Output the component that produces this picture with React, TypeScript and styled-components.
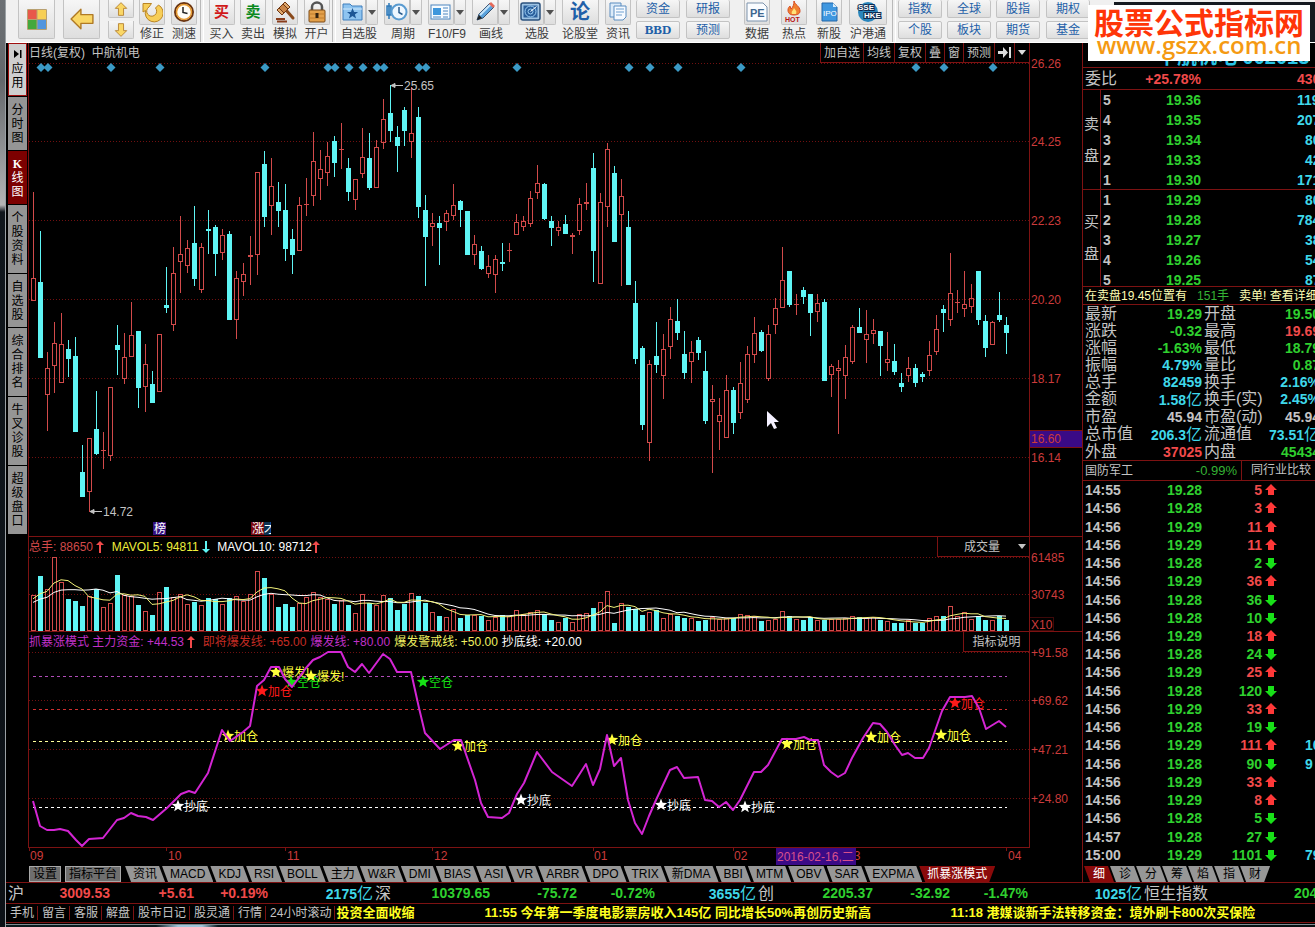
import React from 'react';
import styled, { createGlobalStyle, css } from 'styled-components';

const LINE = '#7d1212';
const AXIS = '#cc3b3b';
const UP = '#d24a4a';
const DOWN = '#5ff5f5';
const CYAN = '#3fd8ea';
const GREEN = '#2fd02f';
const RED = '#f04a4a';
const GREY = '#c4c4c4';

const GlobalStyle = createGlobalStyle`
  * { box-sizing: border-box; }
  html, body { margin: 0; padding: 0; background: #000; overflow: hidden; }
  body { font: 12px/14px "Liberation Sans", "Noto Sans CJK SC", sans-serif; color: ${GREY}; }
  button, select { font: inherit; color: inherit; margin: 0; padding: 0; border: 0; background: none; white-space: nowrap; }
  a { color: inherit; text-decoration: none; }
`;

const Page = styled.div`
  display: flex;
  min-height: 100vh;
  overflow: hidden;
  background: #000;
`;
const DesktopEdge = styled.div`
  flex: none;
  width: 6px;
  border-right: 1px solid #9aa0a4;
  background: linear-gradient(#6c7074 0, #63676b 80px, #b4b4b4 205px, #10161c 212px, #0c1116 100%);
`;
const Window = styled.div`
  flex: 1;
  min-width: 0;
  display: flex;
  flex-direction: column;
`;

/* ---------- toolbar ---------- */
const Toolbar = styled.header`
  position: relative;
  display: flex;
  align-items: flex-start;
  height: 43px;
  padding-left: 12px;
  background: #f0f0f0;
  border-bottom: 1px solid #fff;
  color: #3c3c3c;
  overflow: hidden;
`;
const face = css`
  border: 1px solid #c3c3c3;
  border-top: 0;
  border-radius: 0 0 2px 2px;
  background: linear-gradient(#f6f6f6, #dedede);
  display: flex;
  align-items: center;
  justify-content: center;
`;
const BigButton = styled.button`
  ${face}
  flex: none;
  width: 37px;
  height: 39px;
  margin-right: 8px;
`;
const Stack = styled.div<{ $gap?: number }>`
  flex: none;
  display: flex;
  flex-direction: column;
  gap: 3px;
  margin-right: ${p => p.$gap ?? 6}px;
`;
const SmallButton = styled.button`
  ${face}
  width: 26px;
  height: 18px;
`;
const TextButton = styled.button`
  ${face}
  width: 44px;
  height: 18px;
  border: 1px solid #c3c3c3;
  border-radius: 2px;
  color: #1d5fa8;
  &:first-child { border-top: 0; }
`;
const Bold = styled.b`
  font-family: "Liberation Serif", serif;
  font-size: 13px;
`;
const Tool = styled.div<{ $w?: number }>`
  display: flex;
  flex-direction: column;
  align-items: center;
  width: ${p => p.$w ?? 32}px;
  flex: none;
`;
const ToolFaces = styled.div`
  display: flex;
  height: 25px;
`;
const IconButton = styled.button<{ $w?: number }>`
  ${face}
  width: ${p => p.$w ?? 26}px;
  height: 25px;
`;
const ToolLabel = styled.span`
  line-height: 19px;
  white-space: nowrap;
`;
const Divider = styled.i`
  width: 4px;
  flex: none;
  height: 42px;
  border-left: 1px solid #b9b9b9;
  border-right: 1px solid #fff;
  margin-right: 2px;
`;
const ToolbarEnd = styled.div`
  flex: 1;
  height: 43px;
  margin-top: 2px;
  background: #15191f;
`;
const Glyph = styled.b<{ $c: string; $s?: number }>`
  color: ${p => p.$c};
  font-size: ${p => p.$s ?? 15}px;
  line-height: 20px;
`;
const Brand = styled.a`
  position: absolute;
  z-index: 5;
  left: 1088px;
  top: 5px;
  width: 222px;
  height: 56px;
  overflow: hidden;
  background: #fff;
  text-align: center;
`;
const BrandName = styled.span`
  display: block;
  font: bold 30px/32px "Noto Sans CJK SC", sans-serif;
  color: #ff3508;
  white-space: nowrap;
`;
const BrandUrl = styled.span`
  display: block;
  font: 600 24px/16px "Open Sans", sans-serif;
  color: #f59a12;
`;

/* ---------- body ---------- */
const Main = styled.main`
  display: flex;
  padding-left: 2px;
`;
const SideTabs = styled.nav`
  flex: none;
  width: 20px;
  display: flex;
  flex-direction: column;
  gap: 1px;
`;
const SideTab = styled.button<{ $tall?: boolean; $tone?: 'light' | 'active' }>`
  width: 19px;
  height: ${p => (p.$tall ? 68 : 53)}px;
  display: flex;
  flex-direction: column;
  align-items: center;
  justify-content: center;
  background: ${p => (p.$tone === 'active' ? '#7c0000' : p.$tone === 'light' ? '#cfcfcf' : '#959595')};
  color: ${p => (p.$tone === 'active' ? '#fff' : '#000')};
  ${p => p.$tone === 'light' && 'border: 1px solid #a01010; gap: 4px;'}
  span { width: 12px; line-height: 14px; white-space: normal; word-break: break-all; }
  b { font: bold 12px/14px "Liberation Serif", serif; }
  svg { flex: none; }
`;
const Charts = styled.div`
  flex: 1;
  min-width: 0;
  display: flex;
  flex-direction: column;
  overflow: hidden;
  svg { display: block; flex: none; overflow: visible; }
  svg svg { overflow: hidden; }
`;
const Panel = styled.section<{ $line?: boolean }>`
  ${p => p.$line && `border-top: 1px solid ${LINE};`}
`;
const PanelHead = styled.div`
  display: flex;
  align-items: stretch;
  justify-content: space-between;
  height: 20px;
  margin-right: 52px;
  border-left: 1px solid ${LINE};
  border-right: 1px solid ${LINE};
`;
const Legend = styled.div`
  display: flex;
  align-items: center;
  white-space: pre;
  gap: 4px;
  line-height: 20px;
`;
const Tint = styled.span<{ $c: string }>`
  color: ${p => p.$c};
  display: inline-flex;
  align-items: center;
`;
const HeadButtons = styled.div`
  display: flex;
  border-bottom: 1px solid ${LINE};
`;
const HeadButton = styled.button<{ $w?: number }>`
  display: flex;
  align-items: center;
  justify-content: center;
  border-left: 1px solid ${LINE};
  padding: 0 3px;
  ${p => p.$w && `width: ${p.$w}px;`}
`;
const SelectBox = styled.label`
  display: flex;
  align-items: center;
  justify-content: flex-end;
  width: 92px;
  padding-right: 3px;
  border-left: 1px solid ${LINE};
  border-bottom: 1px solid ${LINE};
  select { appearance: none; width: 54px; outline: none; background: #000; }
`;
const TabStrip = styled.nav`
  display: flex;
  height: 16px;
  padding-left: 1px;
  overflow: hidden;
`;
const SquareTab = styled.button`
  height: 16px;
  padding: 0 3px;
  margin-right: 4px;
  background: #6f6f6f;
  border: 1px solid #a8a8a8;
  color: #000;
  line-height: 14px;
`;
const SlantTab = styled.button<{ $active?: boolean; $last?: boolean; $tight?: boolean }>`
  height: 16px;
  flex: none;
  padding: 0 ${p => (p.$tight ? 8 : 9)}px;
  margin-right: ${p => (p.$tight ? -3 : -4)}px;
  line-height: 16px;
  background: ${p => (p.$active ? '#8a0a0a' : '#979797')};
  color: ${p => (p.$active ? '#fff' : '#000')};
  clip-path: ${p =>
    p.$last
      ? 'polygon(0 0, 100% 0, calc(100% - 6px) 100%, 6px 100%)'
      : 'polygon(0 0, calc(100% - 6px) 0, 100% 100%, 6px 100%)'};
`;

/* ---------- quote panel ---------- */
const Quote = styled.aside`
  flex: none;
  width: 233px;
  display: flex;
  flex-direction: column;
  overflow: hidden;
  border-left: 1px solid ${LINE};
  table { border-collapse: collapse; table-layout: fixed; width: 255px; }
  td, th { padding: 0; font-weight: normal; text-align: left; white-space: nowrap; }
`;
const StockName = styled.h1`
  margin: 0;
  height: 24px;
  padding-left: 74px;
  font: bold 20px/28px "Liberation Sans", "Noto Sans CJK SC", sans-serif;
  color: #29c3e6;
  white-space: nowrap;
`;
const Ratio = styled.div`
  display: flex;
  align-items: center;
  height: 23px;
  padding-left: 2px;
  border-top: 1px solid ${LINE};
  border-bottom: 1px solid ${LINE};
  font-size: 16px;
  white-space: nowrap;
`;
const Num = styled.b<{ $c?: string; $w?: number }>`
  display: inline-block;
  font: bold 14px/16px "Liberation Sans", "Noto Sans CJK SC", sans-serif;
  color: ${p => p.$c ?? GREY};
  ${p => p.$w && `width: ${p.$w}px; text-align: right; flex: none;`}
  i { font: normal 16px/16px "Noto Sans CJK SC", sans-serif; }
`;
const Tail = styled.span`
  margin-left: 96px;
`;
const Book = styled.div<{ $h: number }>`
  display: flex;
  height: ${p => p.$h}px;
  overflow: hidden;
  border-bottom: 1px solid ${LINE};
`;
const BookSide = styled.div`
  flex: none;
  width: 18px;
  border-right: 1px solid ${LINE};
  display: flex;
  flex-direction: column;
  align-items: center;
  justify-content: center;
  gap: 16px;
  font-size: 15px;
  line-height: 16px;
`;
const BookTable = styled.table`
  flex: none;
  height: 100px;
  line-height: 16px;
  tr { height: 20px; }
  td:nth-child(1) { width: 14px; padding-left: 2px; }
  td:nth-child(2) { width: 86px; text-align: right; }
  td.hundreds { padding-left: 96px; }
  td.tens { padding-left: 104px; }
`;
const Alert = styled.div`
  display: flex;
  align-items: center;
  height: 18px;
  padding-left: 2px;
  border-bottom: 1px solid ${LINE};
  color: #ffffb4;
  white-space: pre;
`;
const Stats = styled.table`
  font-size: 16px;
  line-height: 16px;
  tr { height: 17px; }
  td { height: 17px; }
  td:nth-child(1) { width: 50px; padding-left: 2px; }
  td:nth-child(2) { width: 69px; text-align: right; }
  td:nth-child(3) { width: 60px; padding-left: 2px; }
  td:nth-child(4) { width: 58px; text-align: right; }
`;
const Sector = styled.div`
  display: flex;
  align-items: center;
  height: 21px;
  border-top: 1px solid ${LINE};
  border-bottom: 1px solid ${LINE};
  padding-left: 2px;
`;
const SectorChange = styled.span`
  flex: 1;
  text-align: right;
  padding-right: 4px;
  font-size: 13px;
  color: #35b335;
`;
const SectorLink = styled.a`
  width: 74px;
  padding-left: 9px;
  line-height: 19px;
  border-left: 1px solid ${LINE};
  white-space: nowrap;
`;
const Ticks = styled.div`
  flex: 1;
  display: flex;
  table { height: 383px; }
  td:nth-child(1) { width: 46px; padding-left: 2px; }
  td:nth-child(2) { width: 73px; text-align: right; }
  td:nth-child(3) { width: 60px; text-align: right; }
  td:nth-child(4) { width: 43px; padding-left: 3px; }
  svg { display: block; }
`;

/* ---------- footer ---------- */
const Indices = styled.div`
  display: flex;
  height: 21px;
  padding-left: 2px;
  border-top: 1px solid ${LINE};
  font-size: 16px;
  line-height: 19px;
  overflow: hidden;
`;
const IndexGroup = styled.div<{ $cols: number[] }>`
  flex: none;
  display: grid;
  align-items: center;
  white-space: nowrap;
  margin-right: 2px;
  grid-template-columns: 16px ${p => p.$cols.map(c => `${c}px`).join(' ')};
  ${Num} { text-align: right; }
`;
const HangSeng = styled.div`
  display: flex;
  align-items: center;
  gap: 86px;
  white-space: nowrap;
`;
const News = styled.div`
  display: flex;
  align-items: center;
  height: 20px;
  border-top: 1px solid ${LINE};
  border-bottom: 1px solid ${LINE};
  white-space: nowrap;
  overflow: hidden;
`;
const NewsLink = styled.a`
  flex: none;
  padding: 0 3px 0 4px;
  border-right: 1px solid ${LINE};
`;
const Headline = styled.a<{ $w: number }>`
  flex: none;
  width: ${p => p.$w}px;
  padding-left: 1px;
  font-size: 13px;
  font-weight: bold;
  color: #ffff20;
`;
const DesktopBottom = styled.div`
  flex: 1;
  margin-top: 1px;
  border-top: 1px solid #7e8c92;
  background: linear-gradient(90deg, #0b1a1e 150px, #9fc4d8 172px, #9fc4d8 196px, #0b1a1e 212px, #081012);
`;

/* ---------- chart data: [rising, high, bodyTop, bodyBottom, low] ---------- */
const candles: number[][] = [
  [1,192,278,301,301],[0,231,282,358,358],[1,352,368,395,431],[1,322,343,366,393],[1,313,344,383,383],
  [0,340,349,359,377],[0,337,356,432,432],[0,445,472,497,497],[1,438,438,492,512],[0,391,429,454,455],
  [1,432,450,451,469],[1,387,387,456,461],[0,325,345,350,375],[1,333,357,379,384],[1,302,335,357,357],
  [0,331,331,388,408],[1,344,364,387,412],[0,371,384,403,403],[1,334,334,392,392],[0,267,305,308,313],
  [1,247,273,325,331],[1,216,254,262,293],[1,240,248,266,273],[0,206,243,279,286],[1,243,247,290,293],
  [0,210,229,231,254],[0,225,227,254,276],[1,229,235,253,260],[0,231,234,320,320],[1,271,278,320,339],
  [1,263,274,282,296],[1,236,255,257,285],[1,172,172,255,275],[0,151,164,217,227],[1,158,186,206,235],
  [0,182,202,211,227],[0,184,210,249,261],[0,229,239,255,274],[1,197,205,251,251],[1,178,204,205,216],
  [1,132,161,196,206],[1,150,169,179,200],[1,142,156,173,186],[0,136,141,163,177],[1,123,149,150,169],
  [0,158,168,192,201],[1,179,179,200,210],[1,128,157,174,178],[0,133,158,188,190],[1,140,147,188,188],
  [1,99,119,143,149],[0,85,113,131,142],[0,126,137,146,172],[0,107,110,131,146],[1,87,133,142,158],
  [0,107,117,207,218],[0,195,210,237,286],[1,213,223,227,246],[0,216,223,228,265],[1,210,213,222,231],
  [1,184,205,216,220],[0,200,201,210,227],[0,211,211,255,255],[1,235,244,255,265],[0,246,251,269,270],
  [1,255,266,274,278],[1,255,259,275,293],[0,243,262,264,271],[1,243,250,251,262],[1,214,222,235,235],
  [1,216,221,227,231],[1,191,198,224,227],[1,165,183,193,199],[0,183,184,219,220],[0,216,221,228,246],
  [1,221,227,231,236],[0,215,224,234,234],[1,233,235,237,254],[1,198,204,231,235],[1,183,202,204,210],
  [0,153,168,251,282],[1,193,202,284,284],[1,143,149,207,227],[0,166,173,242,242],[1,179,196,215,286],
  [0,211,227,285,285],[0,281,303,359,364],[0,346,348,425,430],[1,360,364,443,461],[0,322,356,365,373],
  [1,334,349,376,399],[1,307,319,347,359],[0,299,321,333,340],[0,331,354,373,379],[1,341,352,362,383],
  [0,337,340,353,360],[0,351,371,421,424],[1,385,399,402,473],[1,398,415,422,450],[1,375,390,438,438],
  [0,387,390,423,434],[1,362,383,413,419],[1,346,354,400,403],[1,317,333,355,363],[0,330,332,351,352],
  [1,325,334,379,381],[1,298,308,325,334],[1,247,280,308,308],[0,271,271,305,307],[1,294,304,305,315],
  [0,287,290,297,304],[0,294,294,313,336],[1,294,303,312,322],[0,299,302,381,381],[1,364,366,375,397],
  [1,360,368,371,434],[1,345,357,376,399],[1,325,327,362,364],[0,308,327,333,333],[1,310,334,340,363],
  [1,319,330,334,344],[0,331,331,346,376],[1,332,359,363,371],[0,344,361,372,375],[0,373,383,387,392],
  [1,357,368,376,382],[0,364,368,383,387],[0,372,374,377,382],[1,341,355,371,376],[1,315,329,352,355],
  [0,305,309,313,332],[1,253,293,320,326],[1,290,302,303,313],[1,271,304,309,317],[1,284,298,307,313],
  [0,271,271,320,325],[0,315,321,348,357],[1,321,322,345,345],[0,292,315,320,322],[0,317,325,333,354],
];
const volumes = [
  36,55,42,74,49,32,30,25,35,42,24,28,56,36,35,26,20,16,39,44,34,37,27,29,26,33,32,27,33,35,30,37,60,53,37,
  24,27,24,28,34,39,34,32,27,31,26,18,37,28,26,36,33,21,27,38,35,28,19,15,14,22,13,16,16,15,11,14,16,15,21,
  17,19,21,17,11,9,13,9,17,18,23,29,40,8,28,24,22,16,19,21,13,17,15,13,13,10,11,14,12,13,13,17,16,15,10,
  11,12,20,15,12,11,14,11,11,12,12,13,15,14,13,14,11,10,8,8,11,8,8,13,15,15,25,15,19,12,15,11,11,15,11,
];
const STEP = 7;
const X0 = 33;
const averagePath = (n: number) => {
  const seed = [22, 24, 25, 26, 28, 30, 30, 32, 33];
  const all = seed.concat(volumes);
  return volumes
    .map((_, i) => {
      const end = i + seed.length + 1;
      const slice = all.slice(end - n, end);
      const mean = slice.reduce((a, b) => a + b, 0) / n;
      return `${X0 + i * STEP},${(631 - mean).toFixed(1)}`;
    })
    .join(' ');
};
const diamonds = [41,48,111,160,265,328,335,349,363,377,384,419,426,517,629,650,678,741,916,944,993];
const capital =
  '33,801 40,826 47,830 54,830 60,829 68,831 76,840 82,846 89,839 103,838 117,820 124,818 131,813 138,816 146,817 153,820 167,808 181,794 189,791 195,793 208,773 222,730 230,741 243,732 250,726 257,686 264,680 271,667 279,667 285,679 292,687 306,668 313,660 320,657 328,652 341,652 348,667 355,672 362,664 369,673 383,654 390,659 397,672 411,672 419,708 425,733 440,749 454,740 461,740 475,780 481,803 488,817 502,818 509,813 517,794 524,783 537,752 552,772 572,786 586,764 593,785 600,769 607,735 614,766 621,758 628,800 635,823 642,834 649,816 656,800 670,770 677,767 684,778 698,777 705,800 712,801 719,807 726,802 733,810 740,800 754,772 761,772 768,765 782,739 796,739 804,737 810,740 818,740 824,765 831,772 838,777 845,773 852,758 863,738 873,723 880,724 887,732 895,745 902,755 908,753 915,758 923,758 929,748 942,711 950,697 965,697 972,696 979,708 986,729 999,721 1006,727';
const WHITE = '#ffffff', YEL = '#ffff3c', SRED = '#ff1a1a', SGRN = '#16e016';
const marks: [number, number, string, string][] = [
  [178,806,'抄底',WHITE],[228,736,'加仓',YEL],[262,691,'加仓',SRED],[276,672,'爆发!',YEL],[291,682,'空仓',SGRN],
  [311,676,'爆发!',YEL],[423,682,'空仓',SGRN],[458,746,'加仓',YEL],[521,800,'抄底',WHITE],[612,740,'加仓',YEL],
  [661,805,'抄底',WHITE],[745,807,'抄底',WHITE],[787,744,'加仓',YEL],[871,737,'加仓',YEL],[941,735,'加仓',YEL],
  [955,703,'加仓',SRED],
];

const Grid = ({ ys }: { ys: number[] }) => (
  <g stroke="#701010" strokeDasharray="1 2" shapeRendering="crispEdges">
    {ys.map(y => <line key={y} x1="29" x2="1029" y1={y + 0.5} y2={y + 0.5} />)}
  </g>
);
const AxisLabels = ({ items }: { items: [number, string][] }) => (
  <g fill={AXIS} fontSize="12">
    {items.map(([y, t]) => <text key={t} x="1031" y={y + 5}>{t}</text>)}
  </g>
);

const KLine = () => (
  <svg width="1054" height="473" viewBox="28 63 1054 473" role="img" aria-label="日线">
    <Grid ys={[63, 141, 220, 299, 378, 457]} />
    <path d="M28.5 63V536M1029.5 63V536" stroke={LINE} />
    {diamonds.map(x => <path key={x} d={`M${x} 63l4.500 4.500-4.500 4.500-4.500-4.500z`} fill="#3b9ac6" />)}
    <g shapeRendering="crispEdges">
      {candles.map(([up, hi, top, bot, lo], i) => {
        const x = X0 + i * STEP;
        const h = Math.max(bot - top, 1);
        return up ? (
          <g key={i} stroke={UP} fill="none">
            <path d={`M${x + 0.5} ${hi}V${top}M${x + 0.5} ${bot}V${lo}`} />
            {h < 2 ? <path d={`M${x - 2} ${top + 0.5}h5`} /> : <rect x={x - 1.5} y={top + 0.5} width="4" height={h - 1} />}
          </g>
        ) : (
          <g key={i} fill={DOWN}>
            <rect x={x} y={hi} width="1" height={lo - hi} />
            <rect x={x - 2} y={top} width="5" height={h} />
          </g>
        );
      })}
    </g>
    <g stroke={GREY} fill={GREY}>
      <path d="M392 85.500h11M391 85.500l4-2v4z" />
      <path d="M90 511.500h12M90 511.500l4-2v4z" />
    </g>
    <g fill={GREY} fontSize="12">
      <text x="404" y="90">25.65</text>
      <text x="103" y="516">14.72</text>
    </g>
    <rect x="153" y="522" width="13" height="13" fill="#35107e" />
    <rect x="251" y="522" width="13" height="13" fill="#7a0a12" />
    <rect x="264" y="522" width="7" height="13" fill="#0c3050" />
    <g fill="#fff" fontSize="12">
      <text x="154" y="533">榜</text>
      <text x="252" y="533">涨</text>
      <svg x="264" y="520" width="7" height="16"><text x="0" y="13">才</text></svg>
    </g>
    <rect x="1029.500" y="430.500" width="53" height="17" fill="#3a0a86" stroke={LINE} />
    <AxisLabels items={[[63,'26.26'],[141,'24.25'],[220,'22.23'],[299,'20.20'],[378,'18.17'],[438,'16.60'],[457,'16.14']]} />
    <path d="M767 411v16l4-4 3 6 3-1-3-6h5z" fill="#f4f0ff" />
  </svg>
);

const Volume = () => (
  <svg width="1054" height="74" viewBox="28 557 1054 74" role="img" aria-label="成交量">
    <Grid ys={[557, 594]} />
    <path d="M28.500 557V631M1029.500 557V631" stroke={LINE} />
    <g shapeRendering="crispEdges">
      {volumes.map((v, i) => {
        const x = X0 + i * STEP;
        return candles[i][0]
          ? <rect key={i} x={x - 1.5} y={631.5 - v} width="4" height={v - 1} fill="none" stroke={UP} />
          : <rect key={i} x={x - 2} y={631 - v} width="5" height={v} fill={DOWN} />;
      })}
    </g>
    <polyline points={averagePath(10)} fill="none" stroke="#fff" />
    <polyline points={averagePath(5)} fill="none" stroke="#f3f37a" />
    <AxisLabels items={[[557,'61485'],[594,'30743'],[624,'X10']]} />
    <rect x="1029.500" y="617.500" width="24" height="13" fill="none" stroke={LINE} strokeDasharray="1 1" />
  </svg>
);

const star = (x: number, y: number) =>
  Array.from({ length: 10 }, (_, k) => {
    const r = k % 2 ? 2.8 : 6.5;
    const a = (Math.PI * k) / 5 - Math.PI / 2;
    return `${(x + r * Math.cos(a)).toFixed(1)},${(y + r * Math.sin(a)).toFixed(1)}`;
  }).join(' ');

const Capital = () => (
  <svg width="1054" height="214" viewBox="28 652 1054 214" role="img" aria-label="主力资金">
    <Grid ys={[652, 700, 749, 798]} />
    <path d="M28.500 652V847M1029.500 652V847M28 847.500H1030" stroke={LINE} fill="none" />
    <g strokeDasharray="3 3" shapeRendering="crispEdges">
      <line x1="33" x2="1007" y1="676.500" y2="676.500" stroke="#b04cb8" />
      <line x1="33" x2="1007" y1="709.500" y2="709.500" stroke="#d03030" />
      <line x1="33" x2="1007" y1="741.500" y2="741.500" stroke="#ffff9a" />
      <line x1="33" x2="1007" y1="807.500" y2="807.500" stroke="#fff" />
    </g>
    {marks.map(([x, y, t, c]) => (
      <g key={x} fill={c}>
        <polygon points={star(x, y)} />
        <text x={x + 6} y={y + 5} fontSize="12">{t}</text>
      </g>
    ))}
    <polyline points={capital} fill="none" stroke="#d325d3" strokeWidth="2" strokeLinejoin="round" />
    <AxisLabels items={[[652,'+91.58'],[700,'+69.62'],[749,'+47.21'],[798,'+24.80']]} />
    <path d="M29.500 848v3M166.500 848v3M285.500 848v3M432.500 848v3M593.500 848v3M733.500 848v3M1006.500 848v3" stroke={LINE} />
    <g fill={AXIS} fontSize="12">
      {([[30,'09'],[168,'10'],[287,'11'],[434,'12'],[594,'01'],[734,'02'],[847,'03'],[1008,'04']] as [number, string][]).map(([x, t]) => (
        <text key={t} x={x} y="860">{t}</text>
      ))}
      <rect x="776" y="848" width="80" height="17" fill="#3a0a86" />
      <text x="777" y="861" fill="#d8508c">2016-02-16,二</text>
    </g>
  </svg>
);

/* ---------- small drawings ---------- */
const Arrow = ({ up, c }: { up?: boolean; c: string }) => (
  <svg width="8" height="12" viewBox="0 0 8 12">
    <path d={up ? 'M4 0l4 4H5v8H3V4H0z' : 'M4 12l4-4H5V0H3v8H0z'} fill={c} />
  </svg>
);
const TickArrow = ({ up }: { up: boolean }) => (
  <svg width="12" height="12" viewBox="0 0 12 12">
    <path d={up ? 'M6 0l6 6H9v5H3V6H0z' : 'M6 12l6-6H9V1H3v5H0z'} fill={up ? '#ff3838' : '#18e018'} />
  </svg>
);
const Caret = ({ c = GREY }: { c?: string }) => (
  <svg width="8" height="5" viewBox="0 0 8 5"><path d="M0 0h8L4 5z" fill={c} /></svg>
);
const GoldArrow = ({ turn, size = 22 }: { turn: number; size?: number }) => (
  <svg width={size} height={size} viewBox="0 0 22 22">
    <path transform={`rotate(${turn} 11 11)`} d="M1 11L10 2v5h11v8H10v5z" fill="#fad766" stroke="#b07a26" strokeWidth="1.300" strokeLinejoin="round" />
  </svg>
);
const Icon = ({ children }: { children: React.ReactNode }) => (
  <svg width="22" height="22" viewBox="0 0 22 22" fill="none">{children}</svg>
);
const icons: Record<string, React.ReactNode> = {
  tiles: (
    <svg width="20" height="21" viewBox="0 0 20 21">
      <rect width="20" height="21" rx="1" fill="#b8a070" />
      <path fill="#e8584a" d="M1 1h8.500v9H1z" /><path fill="#f7cf55" d="M10.500 1H19v9h-8.500z" />
      <path fill="#43a83c" d="M1 11h8.500v9H1z" /><path fill="#5296de" d="M10.500 11H19v9h-8.500z" />
    </svg>
  ),
  refresh: (
    <Icon><path d="M2 2.500h8.500L8 6a5 5 0 1 0 6.500 1l3-3a9 9 0 1 1-13 5.500L2 11z" fill="#f7ce58" stroke="#b98424" strokeLinejoin="round" /></Icon>
  ),
  clock: (
    <Icon><circle cx="11" cy="11" r="9" fill="#fffdf6" stroke="#6a3410" strokeWidth="2" /><circle cx="11" cy="11" r="7.500" stroke="#e79a30" strokeWidth="1.500" /><path d="M10 6v5.500l4.500 1" stroke="#222" strokeWidth="1.500" /></Icon>
  ),
  gavel: (
    <Icon><path d="M12 9l7 8" stroke="#8a4a1c" strokeWidth="3" strokeLinecap="round" /><path d="M3 9l8-8 5 5-8 8z" fill="#c98548" stroke="#6e3613" /><path d="M3 9l2-2 5 5-2 2zM9 3l2-2 5 5-2 2z" fill="#e0a86c" stroke="#6e3613" /><path d="M2 18h9M3 20.500h10" stroke="#8a3d1c" strokeWidth="2" /></Icon>
  ),
  lock: (
    <Icon><path d="M6 10V6a5 4.500 0 0 1 10 0v4" stroke="#555" strokeWidth="2.500" /><rect x="3" y="9" width="16" height="12" rx="1" fill="#e3a04a" stroke="#7a4a18" /><path d="M3 13h16M3 17h16" stroke="#c07c2c" /><path d="M11 12v5" stroke="#33210e" strokeWidth="3" /></Icon>
  ),
  folder: (
    <Icon><path d="M1 3h7l2 2h10v14H1z" fill="#8ec4f0" stroke="#3f7fbd" /><path d="M1 8h19" stroke="#cfe8fb" /><path d="M10.500 7l1.600 4h4l-3.200 2.500 1.200 4-3.600-2.400-3.600 2.400 1.200-4L5 11h4z" fill="#1d5796" /></Icon>
  ),
  period: (
    <Icon><path d="M3 2v16M1 5h4v9H1z" stroke="#2f79b8" fill="#9fd0f0" strokeWidth="1.500" /><circle cx="13" cy="11" r="7.500" fill="#eef7ff" stroke="#5a9bd0" strokeWidth="2" /><path d="M13 6v5.500l3.500 2" stroke="#2b5c8c" strokeWidth="1.500" /></Icon>
  ),
  card: (
    <Icon><rect x="1" y="4" width="19" height="14" fill="#f6fbff" stroke="#4c86c0" /><path d="M3 7h8v7H3z" fill="#3f97dc" /><path d="M3 16h8M13 7h5M13 10h5M13 13h5M13 16h5" stroke="#4c86c0" /></Icon>
  ),
  pencil: (
    <Icon><path d="M3 19l2-6L16 2l4 4L9 17z" fill="#5aa2dc" stroke="#38516e" /><path d="M6 14L17 3" stroke="#c6e4fa" strokeWidth="2" /><path d="M3 19l2-5 3 3z" fill="#222" /><path d="M15 3l2-2 4 4-2 2z" fill="#e46a5a" /></Icon>
  ),
  radar: (
    <Icon><rect x="1" y="2" width="19" height="17" rx="2" fill="#9fc4e4" stroke="#2b527e" strokeWidth="1.500" /><rect x="3.500" y="4.500" width="14" height="12" fill="#2a5f9c" /><circle cx="10.500" cy="10.500" r="5.500" stroke="#9dd0f5" /><circle cx="10.500" cy="10.500" r="2.500" stroke="#9dd0f5" /><path d="M10.500 10.500l6-5" stroke="#fff" /></Icon>
  ),
  pages: (
    <Icon><path d="M3 2h11v14H3z" fill="#dcebf9" stroke="#5b8dc0" /><path d="M7 5h12v11l-3 3H7z" fill="#f6faff" stroke="#5b8dc0" /><path d="M9 8h8M9 11h8M9 14h6" stroke="#6fa0d0" /></Icon>
  ),
  pe: (
    <Icon><path d="M1 2h16l4 4v14H1z" fill="#fafcff" stroke="#7d93ad" /><text x="4" y="16" fontSize="11" fontWeight="bold" fill="#3c6690">PE</text></Icon>
  ),
  hot: (
    <Icon><path d="M11 0c1 4 6 5 6 10 0 3-3 4-6 4s-6-1-6-5c0-2 1-3 2-4l1 3c2-2 3-4 3-8z" fill="#f08030" stroke="#d84a20" /><path d="M11 7c2 3 3 3 2 6H9c-1-3 1-3 2-6z" fill="#ffe27a" /><text x="2" y="21" fontSize="7" fontWeight="bold" fill="#b81414">HOT</text></Icon>
  ),
  ipo: (
    <Icon><path d="M4 2h11l4 4v14H4z" fill="#3f97e0" stroke="#2467a8" /><path d="M15 2v4h4z" fill="#d6ecfc" /><text x="5" y="15" fontSize="8" fill="#fff">IPO</text></Icon>
  ),
  hke: (
    <svg width="30" height="22" viewBox="0 0 30 22"><circle cx="15" cy="11" r="10" fill="#2a86bc" /><g fontSize="8" fontWeight="bold" fill="#fff" stroke="#0e2a50" strokeWidth="2" paintOrder="stroke"><text x="5" y="9">SSE</text><text x="11" y="17">HKE</text></g></svg>
  ),
  buy: <Glyph $c="#d01818">买</Glyph>,
  sell: <Glyph $c="#0a8a1e">卖</Glyph>,
  forum: <Glyph $c="#1f5fa8" $s={20}>论</Glyph>,
};

const ToolItem = ({ icon, label, w, menu, face: fw }: { icon: string; label: string; w?: number; menu?: boolean; face?: number }) => (
  <Tool $w={w}>
    <ToolFaces>
      <IconButton $w={fw} aria-label={label}>{icons[icon]}</IconButton>
      {menu && <IconButton $w={12} aria-label={`${label} ▾`}><Caret c="#505050" /></IconButton>}
    </ToolFaces>
    <ToolLabel>{label}</ToolLabel>
  </Tool>
);
const Pair = ({ a, b, gap }: { a: string; b: React.ReactNode; gap?: number }) => (
  <Stack $gap={gap}><TextButton>{a}</TextButton><TextButton>{b}</TextButton></Stack>
);

/* ---------- quote data ---------- */
const asks = [['5','19.36','119'],['4','19.35','207'],['3','19.34','80'],['2','19.33','42'],['1','19.30','171']];
const bids = [['1','19.29','80'],['2','19.28','784'],['3','19.27','38'],['4','19.26','54'],['5','19.25','87']];
const stats: [string, React.ReactNode, string, string, React.ReactNode, string][] = [
  ['最新','19.29',GREEN,'开盘','19.50',GREEN],
  ['涨跌','-0.32',GREEN,'最高','19.69',RED],
  ['涨幅','-1.63%',GREEN,'最低','18.79',GREEN],
  ['振幅','4.79%',CYAN,'量比','0.87',GREEN],
  ['总手','82459',CYAN,'换手','2.16%',CYAN],
  ['金额',<>1.58<i>亿</i></>,CYAN,'换手(实)','2.45%',CYAN],
  ['市盈','45.94',GREY,'市盈(动)','45.94',GREY],
  ['总市值',<>206.3<i>亿</i></>,CYAN,'流通值',<>73.51<i>亿</i></>,CYAN],
  ['外盘','37025',RED,'内盘','45434',GREEN],
];
const ticks: [string, string, string, number, string?][] = [
  ['14:55','19.28','5',1],['14:56','19.28','3',1],['14:56','19.29','11',1],['14:56','19.29','11',1],['14:56','19.28','2',0],
  ['14:56','19.29','36',1],['14:56','19.28','36',0],['14:56','19.28','10',0],['14:56','19.29','18',1],['14:56','19.28','24',0],
  ['14:56','19.29','25',1],['14:56','19.28','120',0],['14:56','19.29','33',1],['14:56','19.28','19',0],['14:56','19.29','111',1,'10'],
  ['14:56','19.28','90',0,' 9'],['14:56','19.29','33',1],['14:56','19.29','8',1],['14:56','19.28','5',0],['14:57','19.28','27',0],
  ['15:00','19.29','1101',0,'79'],
];
const indicatorTabs = ['资讯','MACD','KDJ','RSI','BOLL','主力','W&R','DMI','BIAS','ASI','VR','ARBR','DPO','TRIX','新DMA','BBI','MTM','OBV','SAR','EXPMA','抓暴涨模式'];

const OrderBook = ({ side, rows, h }: { side: string; rows: string[][]; h: number }) => (
  <Book $h={h}>
    <BookSide><span>{side}</span><span>盘</span></BookSide>
    <BookTable>
      <tbody>
        {rows.map(([n, p, v]) => (
          <tr key={n}>
            <td><Num>{n}</Num></td>
            <td><Num $c={GREEN}>{p}</Num></td>
            <td className={v.length === 3 ? 'hundreds' : 'tens'}><Num $c={CYAN}>{v}</Num></td>
          </tr>
        ))}
      </tbody>
    </BookTable>
  </Book>
);

export default function App() {
  return (
    <Page>
      <GlobalStyle />
      <DesktopEdge />
      <Window>
        <Toolbar>
          <BigButton aria-label="首页">{icons.tiles}</BigButton>
          <BigButton aria-label="后退"><GoldArrow turn={0} size={24} /></BigButton>
          <Stack $gap={2}>
            <SmallButton aria-label="上"><GoldArrow turn={90} size={14} /></SmallButton>
            <SmallButton aria-label="下"><GoldArrow turn={270} size={14} /></SmallButton>
          </Stack>
          <ToolItem icon="refresh" label="修正" />
          <ToolItem icon="clock" label="测速" />
          <Divider />
          <ToolItem icon="buy" label="买入" w={31} />
          <ToolItem icon="sell" label="卖出" />
          <ToolItem icon="gavel" label="模拟" />
          <ToolItem icon="lock" label="开户" w={31} />
          <Divider />
          <ToolItem icon="folder" label="自选股" w={42} menu />
          <ToolItem icon="period" label="周期" w={46} menu />
          <ToolItem icon="card" label="F10/F9" w={42} menu />
          <ToolItem icon="pencil" label="画线" w={46} menu />
          <ToolItem icon="radar" label="选股" w={46} menu />
          <ToolItem icon="forum" label="论股堂" w={40} face={37} />
          <ToolItem icon="pages" label="资讯" w={36} />
          <Pair a="资金" b={<Bold>BBD</Bold>} />
          <Pair a="研报" b="预测" gap={10} />
          <ToolItem icon="pe" label="数据" w={34} />
          <ToolItem icon="hot" label="热点" w={40} />
          <ToolItem icon="ipo" label="新股" w={30} />
          <ToolItem icon="hke" label="沪港通" w={48} face={38} />
          <Divider />
          <Pair a="指数" b="个股" gap={5} />
          <Pair a="全球" b="板块" gap={5} />
          <Pair a="股指" b="期货" gap={6} />
          <Pair a="期权" b="基金" gap={24} />
          <ToolbarEnd />
        </Toolbar>
        <Brand href="#">
          <BrandName>股票公式指标网</BrandName>
          <BrandUrl>www.gszx.com.cn</BrandUrl>
        </Brand>

        <Main>
          <SideTabs>
            <SideTab $tone="light">
              <svg width="8" height="8" viewBox="0 0 8 8"><path d="M0 0l5 4-5 4zM6 0h1.500v8H6z" /></svg>
              <span>应用</span>
            </SideTab>
            <SideTab><span>分时图</span></SideTab>
            <SideTab $tone="active"><b>K</b><span>线图</span></SideTab>
            <SideTab $tall><span>个股资料</span></SideTab>
            <SideTab><span>自选股</span></SideTab>
            <SideTab $tall><span>综合排名</span></SideTab>
            <SideTab $tall><span>牛叉诊股</span></SideTab>
            <SideTab $tall><span>超级盘口</span></SideTab>
          </SideTabs>

          <Charts>
            <Panel>
              <PanelHead>
                <Legend>日线(复权)  中航机电</Legend>
                <HeadButtons>
                  <HeadButton $w={43}>加自选</HeadButton>
                  <HeadButton>均线</HeadButton>
                  <HeadButton>复权</HeadButton>
                  <HeadButton $w={19}>叠</HeadButton>
                  <HeadButton $w={19}>窗</HeadButton>
                  <HeadButton>预测</HeadButton>
                  <HeadButton aria-label="最右">
                    <svg width="13" height="11" viewBox="0 0 13 11"><path d="M0 4h5V0l5 5.500L5 11V7H0zM11 0h2v11h-2z" fill="#ddd" /></svg>
                  </HeadButton>
                  <HeadButton aria-label="更多"><Caret c="#ddd" /></HeadButton>
                </HeadButtons>
              </PanelHead>
              <KLine />
            </Panel>
            <Panel $line>
              <PanelHead>
                <Legend>
                  <Tint $c={UP}>总手: 88650 <Arrow up c={RED} /></Tint>
                  <Tint $c="#f0f03c"> MAVOL5: 94811 <Arrow c={DOWN} /></Tint>
                  <Tint $c="#ffffff"> MAVOL10: 98712<Arrow up c={RED} /></Tint>
                </Legend>
                <SelectBox>
                  <select aria-label="成交量指标"><option>成交量</option></select>
                  <Caret />
                </SelectBox>
              </PanelHead>
              <Volume />
            </Panel>
            <Panel $line>
              <PanelHead>
                <Legend>
                  <Tint $c="#c030c8">抓暴涨模式 主力资金: +44.53 <Arrow up c={RED} /></Tint>
                  <Tint $c="#c42c24"> 即将爆发线: +65.00</Tint>
                  <Tint $c="#c030c8">爆发线: +80.00</Tint>
                  <Tint $c="#f0f060">爆发警戒线: +50.00</Tint>
                  <Tint $c="#ffffff">抄底线: +20.00</Tint>
                </Legend>
                <HeadButtons><HeadButton $w={66}>指标说明</HeadButton></HeadButtons>
              </PanelHead>
              <Capital />
            </Panel>
            <TabStrip>
              <SquareTab>设置</SquareTab>
              <SquareTab>指标平台</SquareTab>
              {indicatorTabs.map((t, i) => (
                <SlantTab key={t} $tight $active={i === 20} $last={i === 20}>{t}</SlantTab>
              ))}
            </TabStrip>
          </Charts>

          <Quote>
            <StockName>中航机电 002013</StockName>
            <Ratio>
              委比<Num $c={RED} $w={84}>+25.78%</Num>
              <Tail><Num $c={RED}>430</Num></Tail>
            </Ratio>
            <OrderBook side="卖" rows={asks} h={100} />
            <OrderBook side="买" rows={bids} h={97} />
            <Alert>在卖盘19.45位置有   <Tint $c="#35b335">151手</Tint>   卖单! 查看详细</Alert>
            <Stats>
              <tbody>
                {stats.map(([a, v, c, b, w, d]) => (
                  <tr key={a}>
                    <td>{a}</td><td><Num $c={c}>{v}</Num></td>
                    <td>{b}</td><td><Num $c={d}>{w}</Num></td><td />
                  </tr>
                ))}
              </tbody>
            </Stats>
            <Sector>
              国防军工<SectorChange>-0.99%</SectorChange>
              <SectorLink href="#">同行业比较</SectorLink>
            </Sector>
            <Ticks>
              <table>
                <tbody>
                  {ticks.map(([t, p, v, up, extra], i) => (
                    <tr key={i}>
                      <td><Num>{t}</Num></td>
                      <td><Num $c={GREEN}>{p}</Num></td>
                      <td><Num $c={up ? RED : GREEN}>{v}</Num></td>
                      <td><TickArrow up={!!up} /></td>
                      <td>{extra && <Num $c={CYAN}>{extra}</Num>}</td>
                    </tr>
                  ))}
                </tbody>
              </table>
            </Ticks>
            <TabStrip>
              {['细','诊','分','筹','焰','指','财'].map((t, i) => (
                <SlantTab key={t} $active={i === 0} $last={i === 6}>{t}</SlantTab>
              ))}
            </TabStrip>
          </Quote>
        </Main>

        <Indices>
          <IndexGroup $cols={[86, 84, 74, 105]}>
            沪<Num $c={RED}>3009.53</Num><Num $c={RED}>+5.61</Num><Num $c={RED}>+0.19%</Num><Num $c={CYAN}>2175<i>亿</i></Num>
          </IndexGroup>
          <IndexGroup $cols={[99, 87, 78, 101]}>
            深<Num $c={GREEN}>10379.65</Num><Num $c={GREEN}>-75.72</Num><Num $c={GREEN}>-0.72%</Num><Num $c={CYAN}>3655<i>亿</i></Num>
          </IndexGroup>
          <IndexGroup $cols={[99, 77, 78, 114]}>
            创<Num $c={GREEN}>2205.37</Num><Num $c={GREEN}>-32.92</Num><Num $c={GREEN}>-1.47%</Num><Num $c={CYAN}>1025<i>亿</i></Num>
          </IndexGroup>
          <HangSeng>恒生指数<Num $c={GREEN}>204</Num></HangSeng>
        </Indices>
        <News>
          {['手机','留言','客服','解盘','股市日记','股灵通','行情','24小时滚动'].map(t => (
            <NewsLink key={t} href="#">{t}</NewsLink>
          ))}
          <Headline href="#" $w={148}>投资全面收缩</Headline>
          <Headline href="#" $w={466}>11:55 今年第一季度电影票房收入145亿 同比增长50%再创历史新高</Headline>
          <Headline href="#" $w={360}>11:18 港媒谈新手法转移资金：境外刷卡800次买保险</Headline>
        </News>
        <DesktopBottom />
      </Window>
    </Page>
  );
}
